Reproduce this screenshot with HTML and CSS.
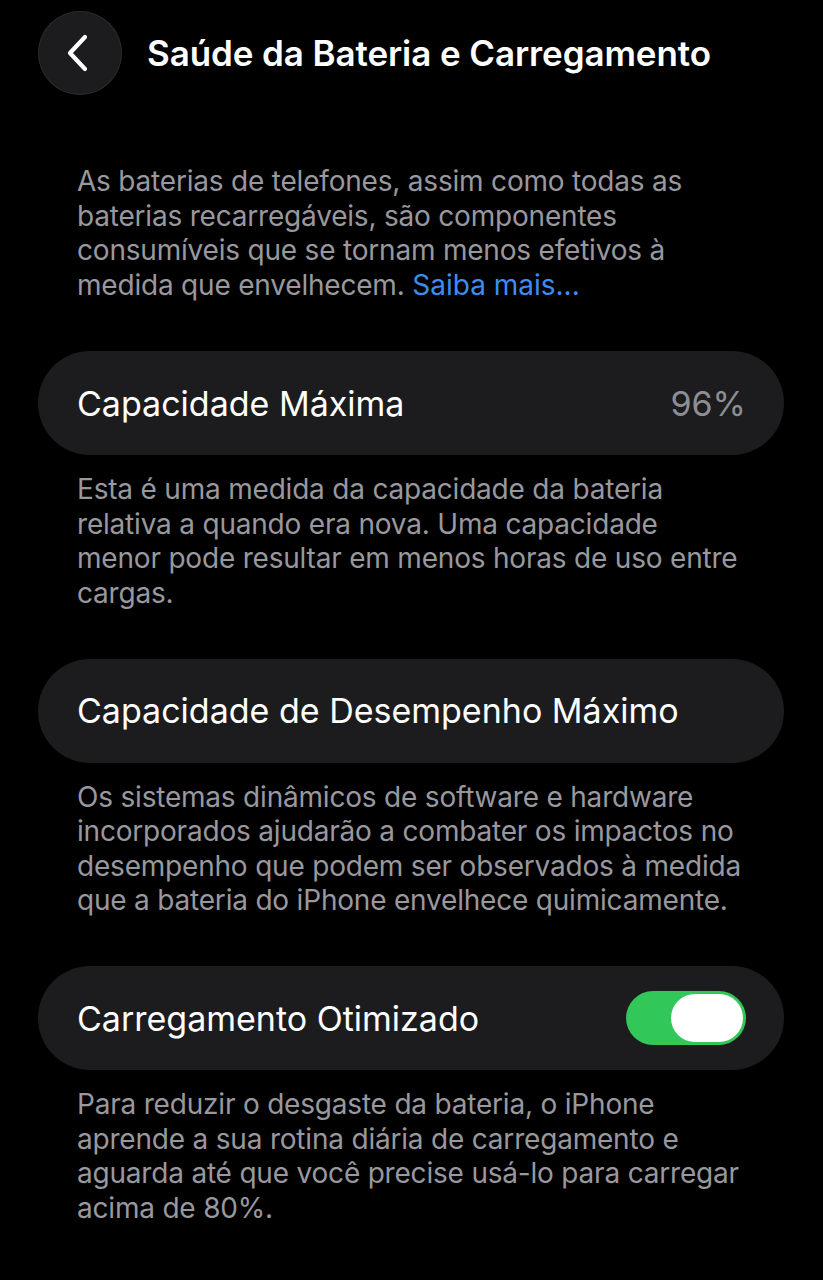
FILE: index.html
```html
<!DOCTYPE html>
<html lang="pt-BR">
<head>
<meta charset="utf-8">
<link rel="stylesheet" href="styles.css">
</head>
<body>
<div class="screen">
  <header class="nav">
    <div class="back">
      <svg width="28" height="40" viewBox="0 0 28 40"><path d="M21 4 L6 20 L21 36" fill="none" stroke="#fff" stroke-width="4.2" stroke-linecap="round" stroke-linejoin="round"/></svg>
    </div>
    <h1 class="title">Saúde da Bateria e Carregamento</h1>
  </header>

  <p class="note intro">As baterias de telefones, assim como todas as baterias recarregáveis, são componentes consumíveis que se tornam menos efetivos à medida que envelhecem. <a class="link">Saiba mais...</a></p>

  <div class="card">
    <span class="label">Capacidade Máxima</span>
    <span class="value">96%</span>
  </div>
  <p class="note">Esta é uma medida da capacidade da bateria relativa a quando era nova. Uma capacidade menor pode resultar em menos horas de uso entre cargas.</p>

  <div class="card">
    <span class="label">Capacidade de Desempenho Máximo</span>
  </div>
  <p class="note">Os sistemas dinâmicos de software e hardware incorporados ajudarão a combater os impactos no desempenho que podem ser observados à medida que a bateria do iPhone envelhece quimicamente.</p>

  <div class="card">
    <span class="label">Carregamento Otimizado</span>
    <span class="toggle"><span class="knob"></span></span>
  </div>
  <p class="note">Para reduzir o desgaste da bateria, o iPhone aprende a sua rotina diária de carregamento e aguarda até que você precise usá-lo para carregar acima de 80%.</p>
</div>
</body>
</html>
```
FILE: styles.css
```css
html, body {
  margin: 0;
  padding: 0;
  background: #000;
}
body {
  font-family: Inter, "Noto Sans", sans-serif;
  color: #fff;
}
.screen {
  width: 823px;
  height: 1280px;
  overflow: hidden;
  box-sizing: border-box;
  padding: 11px 39px 0 38px;
}
.nav {
  display: flex;
  align-items: center;
  gap: 25px;
  height: 84px;
}
.back {
  width: 84px;
  height: 84px;
  border-radius: 50%;
  background: #1c1c1e;
  box-shadow: inset 0 0 0 1px #2a2a2c;
  display: flex;
  align-items: center;
  justify-content: center;
  flex-shrink: 0;
}
.back svg {
  margin-left: -4px;
}
.title {
  margin: 0;
  font-size: 35px;
  font-weight: 600;
  letter-spacing: -0.1px;
}
.note {
  margin: 0;
  padding: 0 39px 0 39px;
  color: #98989e;
  font-size: 28px;
  line-height: 34.5px;
  letter-spacing: -0.2px;
}
.intro {
  margin-top: 69px;
  margin-bottom: 49px;
}
.link {
  color: #3b8cf4;
  text-decoration: none;
  letter-spacing: 0;
}
.card {
  height: 104px;
  border-radius: 52px;
  background: #1c1c1e;
  display: flex;
  align-items: center;
  justify-content: space-between;
  padding: 0 38px 0 39px;
  margin-bottom: 17px;
}
.label {
  font-size: 34px;
  letter-spacing: 0;
}
.value {
  font-size: 34px;
  color: #8e8e93;
}
.toggle {
  width: 120px;
  height: 54px;
  border-radius: 27px;
  background: #32c759;
  display: flex;
  align-items: center;
  justify-content: flex-end;
  padding: 0 3px;
  box-sizing: border-box;
}
.knob {
  width: 72px;
  height: 48px;
  border-radius: 24px;
  background: #fff;
}
.card + .note {
  margin-bottom: 48.5px;
}
```
